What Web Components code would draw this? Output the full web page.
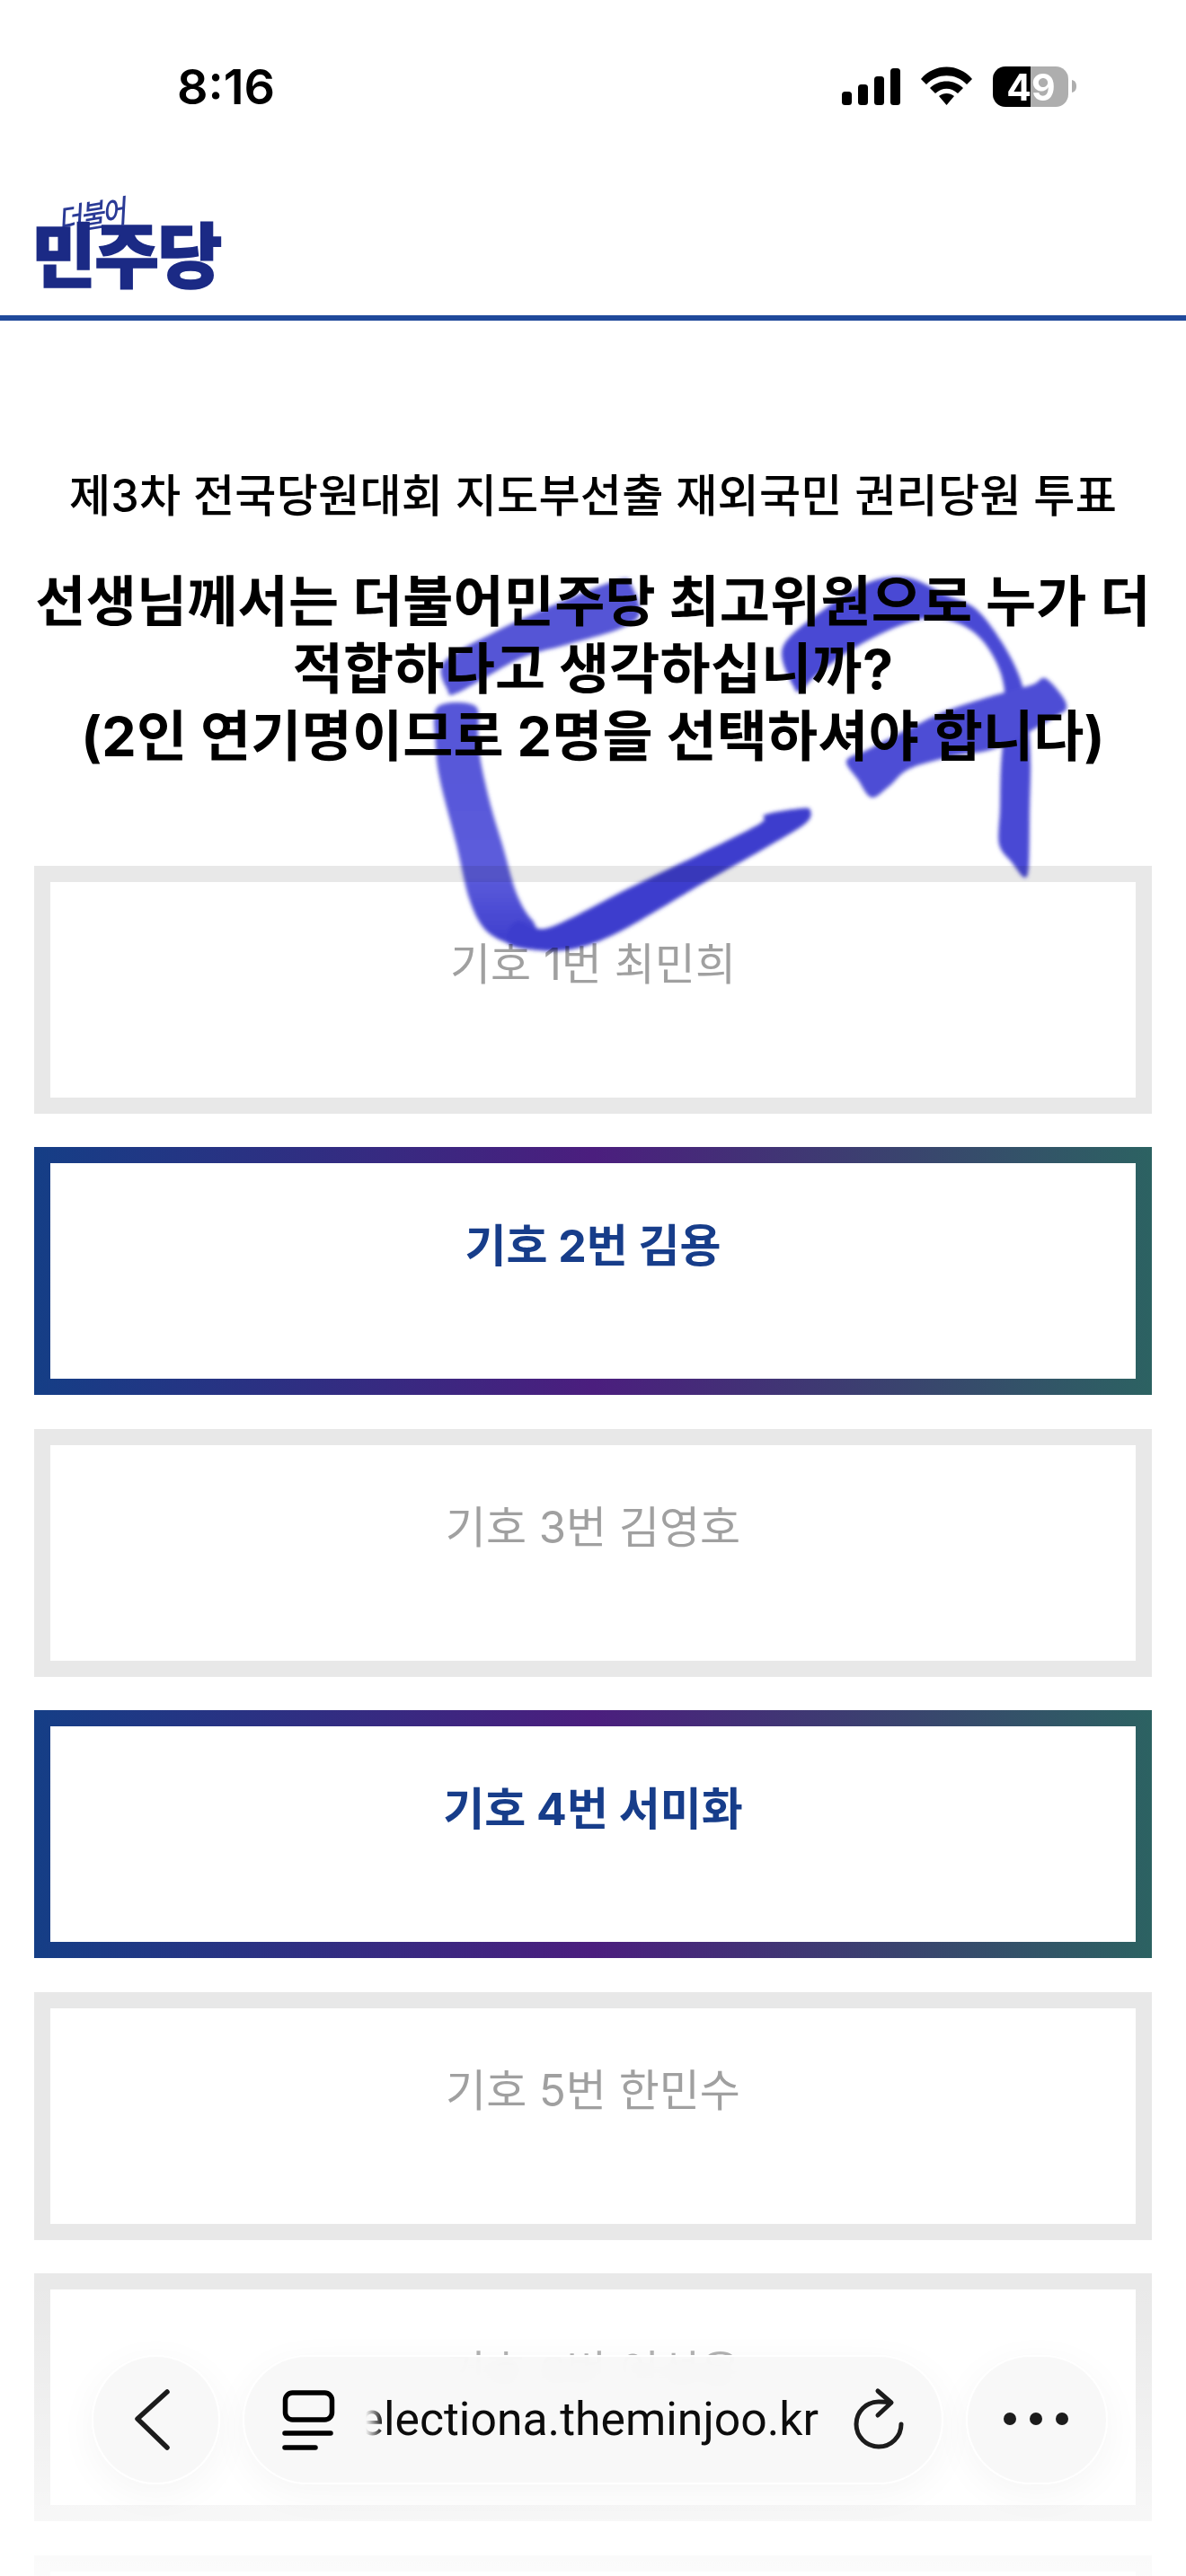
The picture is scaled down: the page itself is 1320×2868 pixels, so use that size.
<!doctype html>
<html lang="ko"><head><meta charset="utf-8">
<style>
html,body{margin:0;padding:0;background:#fff}
body{width:1320px;height:2868px;overflow:hidden;position:relative;font-family:"Inter","Noto Sans CJK KR",sans-serif}
</style></head><body>
<status-bar></status-bar>
<site-header></site-header>
<vote-page>
  <span slot="sub">제3차 전국당원대회 지도부선출 재외국민 권리당원 투표</span>
  <span slot="q">선생님께서는 더불어민주당 최고위원으로 누가 더<br>적합하다고 생각하십니까?<br>(2인 연기명이므로 2명을 선택하셔야 합니다)</span>
  <vote-option>기호 1번 최민희</vote-option>
  <vote-option selected>기호 2번 김용</vote-option>
  <vote-option>기호 3번 김영호</vote-option>
  <vote-option selected>기호 4번 서미화</vote-option>
  <vote-option>기호 5번 한민수</vote-option>
  <vote-option>기호 6번 이성윤</vote-option>
  <vote-option peek></vote-option>
</vote-page>
<pen-stroke></pen-stroke>
<safari-bar></safari-bar>
<script>
function def(name,html){customElements.define(name,class extends HTMLElement{constructor(){super();this.attachShadow({mode:'open'}).innerHTML=html;}});}
function sm(p){const n=p.length,f=x=>x.toFixed(1);let d='M'+p[0].join(' ');for(let i=0;i<n;i++){const a=p[(i-1+n)%n],b=p[i],c=p[(i+1)%n],e=p[(i+2)%n];const t=.16;d+=' C'+f(b[0]+(c[0]-a[0])*t)+' '+f(b[1]+(c[1]-a[1])*t)+' '+f(c[0]-(e[0]-b[0])*t)+' '+f(c[1]-(e[1]-b[1])*t)+' '+c.join(' ');}return d+'Z';}
const s1=sm([[494,737],[552,703],[620,672],[690,645],[703,652],[712,683],[690,700],[630,718],[579,733],[510,771],[498,768]]);
const s2=sm([[487,787],[529,786],[532,820],[536,853],[547,900],[559,940],[575,995],[592,1024],[611,1033],[700,989],[781,950],[846,917],[852,907],[893,900],[902,903],[896,917],[850,945],[781,984],[690,1037],[640,1056],[600,1058],[565,1050],[539,1034],[522,1000],[508,940],[490,870],[485,830]]);
const s3=sm([[884,766],[871,721],[915,680],[968,648],[1010,643],[1052,662],[1086,678],[1115,715],[1136,757],[1144,800],[1147,850],[1146,900],[1145,964],[1140,977],[1126,960],[1112,940],[1113,900],[1114,853],[1119,790],[1114,750],[1095,715],[1069,695],[1034,688],[993,700],[945,725],[905,755],[893,768]]);
const s4=sm([[942,847],[965,835],[1010,812],[1057,790],[1121,770],[1150,762],[1163,755],[1180,772],[1187,786],[1178,796],[1111,832],[1060,842],[1012,856],[990,875],[970,888],[955,868]]);
const s5=sm([[575,1025],[611,1033],[700,989],[781,950],[846,917],[852,907],[893,900],[902,903],[896,917],[850,945],[781,984],[690,1037],[640,1056],[600,1058],[565,1050]]);
def('status-bar',`<style>:host{display:flex;box-sizing:border-box;height:190px;padding:70px 122px 0 197px;justify-content:space-between;align-items:flex-start}
.t{font:600 54px/54px "Inter","Liberation Sans",sans-serif;color:#000;letter-spacing:0}
svg{display:block}</style>
<div class="t">8:16</div>
<svg width="261" height="55" viewBox="937 70 261 55">
<rect x="937" y="102" width="11" height="15" rx="3.5"/><rect x="955" y="94" width="11" height="23" rx="3.5"/><rect x="973" y="85" width="11" height="32" rx="3.5"/><rect x="991" y="76" width="11" height="41" rx="3.5"/>
<path d="M1025 88 C1040 70 1067 70 1082 88 L1076 94 C1064 81 1043 81 1031 94Z"/><path d="M1035 98 C1045 88 1062 88 1072 98 L1066 104 C1058 97 1049 97 1041 104Z"/><path d="M1045 107 C1050 103 1057 103 1062 107 L1053.5 117Z"/>
<path d="M1119 74 H1147 V119 H1119 A14 14 0 0 1 1105 105 V88 A14 14 0 0 1 1119 74Z" fill="#000"/>
<path d="M1147 74 H1175 A14 14 0 0 1 1189 88 V105 A14 14 0 0 1 1175 119 H1147Z" fill="#aeaeae"/>
<path d="M1193 89 C1197 90 1198 93 1198 96 C1198 99 1197 102 1193 103Z" fill="#aeaeae"/>
<text x="1147.5" y="112" text-anchor="middle" font-family="Inter,Liberation Sans,sans-serif" font-weight="700" font-size="41" fill="#fff">49</text>
</svg>`);
def('site-header',`<style>:host{display:block;box-sizing:border-box;height:167px;border-bottom:6px solid #204a9b;padding:27px 0 0 38px}
.logo{position:relative;width:210px;height:104px;color:#1b2a85;font-family:"Noto Sans CJK KR",sans-serif}
.main{position:absolute;left:-3px;top:23px;font-size:78px;font-weight:900;line-height:80px;letter-spacing:-1.5px;white-space:nowrap;-webkit-text-stroke:1.6px #1b2a85}
.hand{position:absolute;left:29px;top:0;font-size:29px;font-weight:500;line-height:40px;letter-spacing:-2px;white-space:nowrap;transform:rotate(-9deg) skewX(-12deg) scaleY(1.2);color:#2a3a96}
</style><div class="logo"><span class="hand">더불어</span><span class="main">민주당</span></div>`);
def('vote-page',`<style>:host{display:block;padding:0 38px}
.sub{margin:0;padding-top:160px;text-align:center;font-size:50.2px;font-weight:500;line-height:70px;color:#000;white-space:nowrap;letter-spacing:.2px}
.q{margin:0;padding-top:46px;text-align:center;font-size:61px;font-weight:700;line-height:75px;color:#000;white-space:nowrap;letter-spacing:.2px;margin-inline:-20px}
.list{display:flex;flex-direction:column;gap:37.8px;padding-top:106px}</style>
<p class="sub"><slot name="sub"></slot></p><p class="q"><slot name="q"></slot></p><div class="list"><slot></slot></div>`);
def('vote-option',`<style>:host{display:block;box-sizing:border-box;height:275.7px;padding:18px;background:#e8e8e8;color:#a0a0a0;font-size:49px;font-weight:400}
:host([selected]){background:linear-gradient(90deg,#153e86 0%,#4b1e7e 50%,#2c6262 100%);color:#173d8a;font-weight:700;font-size:50px}
:host([peek]){height:23px;padding:18px 18px 0}
.in{background:#fff;height:100%;box-sizing:border-box;padding-top:62px;text-align:center;line-height:60px;white-space:nowrap}
:host([peek]) .in{padding:0}</style><div class="in"><slot></slot></div>`);
def('pen-stroke',`<style>:host{display:block;position:absolute;left:0;top:0;width:1320px;height:1200px;mix-blend-mode:multiply;pointer-events:none}
svg{display:block}</style>
<svg width="1320" height="1200" viewBox="0 0 1320 1200"><defs>
<linearGradient id="g" x1="0" y1="787" x2="0" y2="1056" gradientUnits="userSpaceOnUse"><stop offset="0" stop-color="#5656d8"/><stop offset=".7" stop-color="#5c5cdb"/><stop offset="1" stop-color="#3b3bcc"/></linearGradient>
<filter id="b" x="-5%" y="-5%" width="110%" height="110%"><feGaussianBlur stdDeviation="2"/></filter></defs>
<g filter="url(#b)">
<path fill="#5454d6" d="${s1}"/>
<path fill="url(#g)" d="${s2}"/>
<path fill="#3d3dcd" d="${s5}"/>
<path fill="#4a4ad4" d="${s3}"/>
<path fill="#4e4ed5" d="${s4}"/>
</g></svg>`);
def('safari-bar',`<style>:host{display:flex;position:absolute;left:0;right:0;bottom:0;height:368px;box-sizing:border-box;padding:122px 88px 0 102px;gap:25px;align-items:flex-start;
background:linear-gradient(to bottom,rgba(255,255,255,0) 0,rgba(255,255,255,.1) 80px,rgba(255,255,255,.55) 260px,rgba(255,255,255,.85) 368px)}
.b{box-sizing:border-box;height:144px;border-radius:72px;border:2.5px solid rgba(255,255,255,.98);background:rgba(248,248,248,.94);-webkit-backdrop-filter:blur(12px);backdrop-filter:blur(12px);box-shadow:0 10px 44px rgba(0,0,0,.045);display:flex;align-items:center;flex:none}
.back{width:143px}.more{width:158px}.pill{width:780px}
svg{display:block;flex:none}
.url{width:520px;margin-left:22px;font:400 51.7px/60px "Roboto","Inter",sans-serif;color:#0c0c0c;white-space:nowrap;-webkit-mask-image:linear-gradient(90deg,transparent 7px,#000 27px);mask-image:linear-gradient(90deg,transparent 7px,#000 27px)}
</style>
<div class="b back"><svg width="143" height="144" viewBox="102 2622 143 144" style="margin-left:-2.5px" fill="none" stroke="#1c1c1c" stroke-width="5.5" stroke-linecap="round" stroke-linejoin="round"><path d="M186 2663 L153 2693 L186 2725"/></svg></div>
<div class="b pill"><svg width="66" height="72" viewBox="312 2658 66 72" style="margin-left:39.5px" fill="none" stroke="#000" stroke-width="5.5" stroke-linecap="round"><rect x="317.5" y="2664" width="52" height="30" rx="8"/><path d="M317 2709 H368 M317 2725 H351"/></svg><div class="url">electiona.theminjoo.kr</div><svg width="66" height="72" viewBox="945 2655 66 72" style="margin-left:25px" fill="none" stroke="#1c1c1c" stroke-width="5" stroke-linecap="round" stroke-linejoin="round"><path d="M990 2672 C986 2671 982 2671 978 2671 A25 25 0 1 0 1003 2696"/><path d="M977 2659 L992 2672 L977 2686"/></svg></div>
<div class="b more"><svg width="158" height="144" viewBox="1074 2622 158 144" style="margin-left:-2.5px" fill="#1c1c1c"><circle cx="1123" cy="2693" r="7"/><circle cx="1152" cy="2693" r="7"/><circle cx="1181" cy="2693" r="7"/></svg></div>`);
</script>
</body></html>
